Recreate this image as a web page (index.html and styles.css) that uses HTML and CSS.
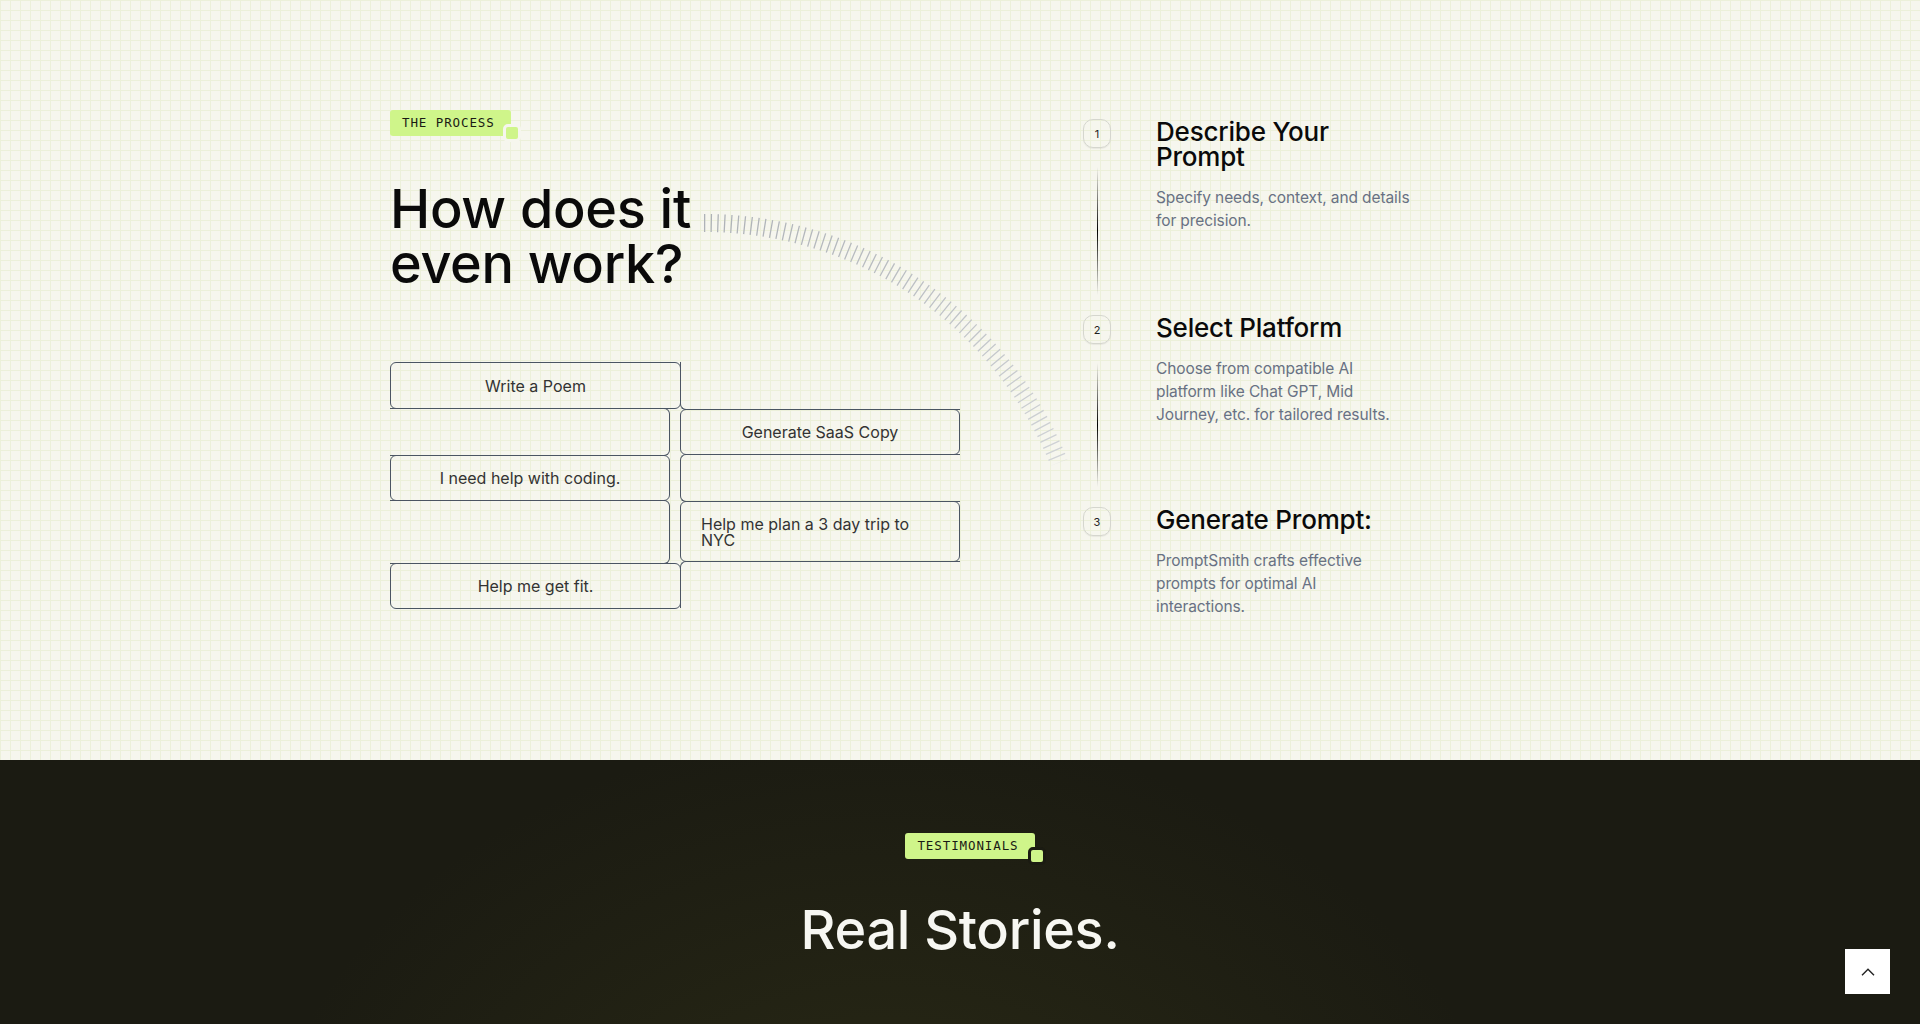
FILE: index.html
```html
<!DOCTYPE html>
<html lang="en">
<head>
<meta charset="utf-8">
<title>How does it even work?</title>
<link rel="stylesheet" href="styles.css">
</head>
<body>
<section class="process">
  <div class="container process-grid">
    <div class="left">
      <span class="badge">THE PROCESS<i class="badge-dot"></i></span>
      <h2 class="title">How does it<br>even work?</h2>
      <div class="prompts">
        <div class="pcol pcol-l">
          <div class="pbox w-wide h47">Write a Poem</div>
          <div class="pbox w-narrow h48 open-l"></div>
          <div class="pbox w-narrow h46">I need help with coding.</div>
          <div class="pbox w-narrow h64 open-l"></div>
          <div class="pbox w-wide h46">Help me get fit.</div>
        </div>
        <div class="pcol pcol-r">
          <div class="pbox h48 open-tr"></div>
          <div class="pbox h46">Generate SaaS Copy</div>
          <div class="pbox h48 open-r"></div>
          <div class="pbox h61 left-text">Help me plan a 3 day trip to NYC</div>
          <div class="pbox h47 open-rb"></div>
        </div>
      </div>
      <svg class="arc" width="390" height="280" viewBox="0 0 390 280" aria-hidden="true">
        <defs>
          <linearGradient id="tickfade" x1="0" y1="0" x2="1" y2="1">
            <stop offset="0" stop-color="#aeb2b7"/>
            <stop offset="1" stop-color="#d0d3d6"/>
          </linearGradient>
        </defs>
        <path d="M 14 23 A 383 383 0 0 1 369.1 262.5" fill="none" stroke="url(#tickfade)" stroke-width="18" stroke-dasharray="1.3 5.38"/>
      </svg>
    </div>
    <div class="steps">
      <div class="step">
        <div class="rail"><span class="num">1</span><span class="line"></span></div>
        <div class="step-body">
          <h3>Describe Your Prompt</h3>
          <p>Specify needs, context, and details for precision.</p>
        </div>
      </div>
      <div class="step step-mid">
        <div class="rail"><span class="num">2</span><span class="line"></span></div>
        <div class="step-body">
          <h3>Select Platform</h3>
          <p>Choose from compatible AI platform like Chat GPT, Mid Journey, etc. for tailored results.</p>
        </div>
      </div>
      <div class="step step-last">
        <div class="rail"><span class="num">3</span></div>
        <div class="step-body">
          <h3>Generate Prompt:</h3>
          <p class="narrow">PromptSmith crafts effective prompts for optimal AI interactions.</p>
        </div>
      </div>
    </div>
  </div>
</section>
<section class="testimonials">
  <div class="t-badge-row"><span class="badge badge-dark">TESTIMONIALS<i class="badge-dot"></i></span></div>
  <h2 class="title title-light">Real Stories.</h2>
</section>
<button class="to-top" aria-label="Back to top">
  <svg width="14" height="8" viewBox="0 0 14 8"><path d="M1 7.2 L7 1.2 L13 7.2" fill="none" stroke="#222" stroke-width="1.4"/></svg>
</button>
</body>
</html>
```
FILE: styles.css
```css
* { box-sizing: border-box; }
html, body { margin: 0; padding: 0; }
body {
  font-family: Inter, "Noto Sans", sans-serif;
  color: #0a0a0a;
  background: #1b1b12;
}
.process {
  min-height: 760px;
  padding-top: 110px;
  background-color: #f6f6ee;
  background-image:
    linear-gradient(to right, #ecf0da 1px, transparent 1px),
    linear-gradient(to bottom, #ecf0da 1px, transparent 1px);
  background-size: 10px 10px;
}
.container { width: 1140px; margin: 0 auto; }
.process-grid { display: grid; grid-template-columns: 693px 1fr; }
.left { position: relative; display: flex; flex-direction: column; align-items: flex-start; }

.badge {
  position: relative;
  display: inline-block;
  height: 26px;
  line-height: 26px;
  padding: 0 16px 0 12px;
  background: #cff58a;
  border-radius: 3px;
  font-family: "DejaVu Sans Mono", "Liberation Mono", monospace;
  font-size: 12.5px;
  letter-spacing: 0.9px;
  color: #1a1a14;
}
.badge-dot {
  position: absolute;
  right: -10px;
  bottom: -6px;
  width: 18px;
  height: 18px;
  background: #cff58a;
  border: 3px solid #f6f6ee;
  border-radius: 5px;
}
.badge-dark .badge-dot { border-color: #1b1b12; right: -11px; }

.title {
  margin: 45px 0 0;
  font-size: 54px;
  line-height: 55px;
  font-weight: 500;
  letter-spacing: -0.3px;
  color: #0a0a0a;
}

.prompts { display: flex; margin-top: 71px; }
.pcol { display: flex; flex-direction: column; }
.pcol-l { width: 291px; }
.pcol-r { width: 280px; margin-left: -1px; }
.pbox {
  display: flex;
  align-items: center;
  justify-content: center;
  width: 100%;
  border: 1px solid #4b5563;
  border-radius: 6px;
  font-size: 16px;
  color: #333;
}
.pbox + .pbox { margin-top: -1px; }
.w-wide { width: 291px; }
.w-narrow { width: 280px; }
.h46 { height: 46px; }
.h47 { height: 47px; }
.h48 { height: 48px; }
.h61 { height: 61px; }
.h64 { height: 64px; }
.open-l { border-left: none; border-radius: 0 6px 6px 0; }
.open-r { border-right: none; border-radius: 6px 0 0 6px; }
.open-tr { border-top: none; border-right: none; border-radius: 0 0 0 6px; }
.open-rb { border-right: none; border-bottom: none; border-radius: 6px 0 0 0; }
.left-text { justify-content: flex-start; padding: 0 40px 0 20px; line-height: 16px; }

.arc { position: absolute; left: 300px; top: 90px; }

.steps { padding-top: 9px; }
.step { display: flex; gap: 45px; }
.rail { display: flex; flex-direction: column; align-items: center; width: 28px; }
.num {
  display: flex;
  align-items: center;
  justify-content: center;
  width: 28px;
  height: 29px;
  border: 1px solid #d5d6ce;
  border-radius: 10px;
  box-shadow: 0 1px 1px rgba(0,0,0,0.06);
  font-size: 11px;
  color: #1f1f1f;
}
.line {
  flex: 1;
  width: 1px;
  margin: 19px 0 20px;
  background: linear-gradient(to bottom, rgba(0,0,0,0), #000 50%, rgba(0,0,0,0));
}
.step-body { width: 256px; padding-bottom: 83px; }
.step-mid .step-body { padding-bottom: 81px; }
.step-last .step-body { padding-bottom: 0; }
.step h3 {
  margin: 0;
  font-size: 26px;
  line-height: 25px;
  font-weight: 500;
  letter-spacing: -0.2px;
  color: #0a0a0a;
}
.step p {
  margin: 17px 0 0;
  font-size: 15.5px;
  line-height: 23px;
  letter-spacing: -0.1px;
  color: #687183;
}
.step p.narrow { width: 236px; }

.testimonials {
  min-height: 480px;
  padding-top: 73px;
  text-align: center;
  background-color: #1b1b12;
  background-image: radial-gradient(ellipse 900px 700px at 46% 95%, rgba(70, 70, 28, 0.35), rgba(27, 27, 18, 0) 70%);
}
.t-badge-row { display: flex; justify-content: center; }
.t-badge-row .badge { margin-left: 20px; }
.title-light { color: #f7f7f2; margin-top: 43px; }

.to-top {
  position: fixed;
  right: 30px;
  bottom: 30px;
  width: 45px;
  height: 45px;
  display: flex;
  align-items: center;
  justify-content: center;
  padding: 0;
  border: none;
  background: #fff;
  cursor: pointer;
}
```
